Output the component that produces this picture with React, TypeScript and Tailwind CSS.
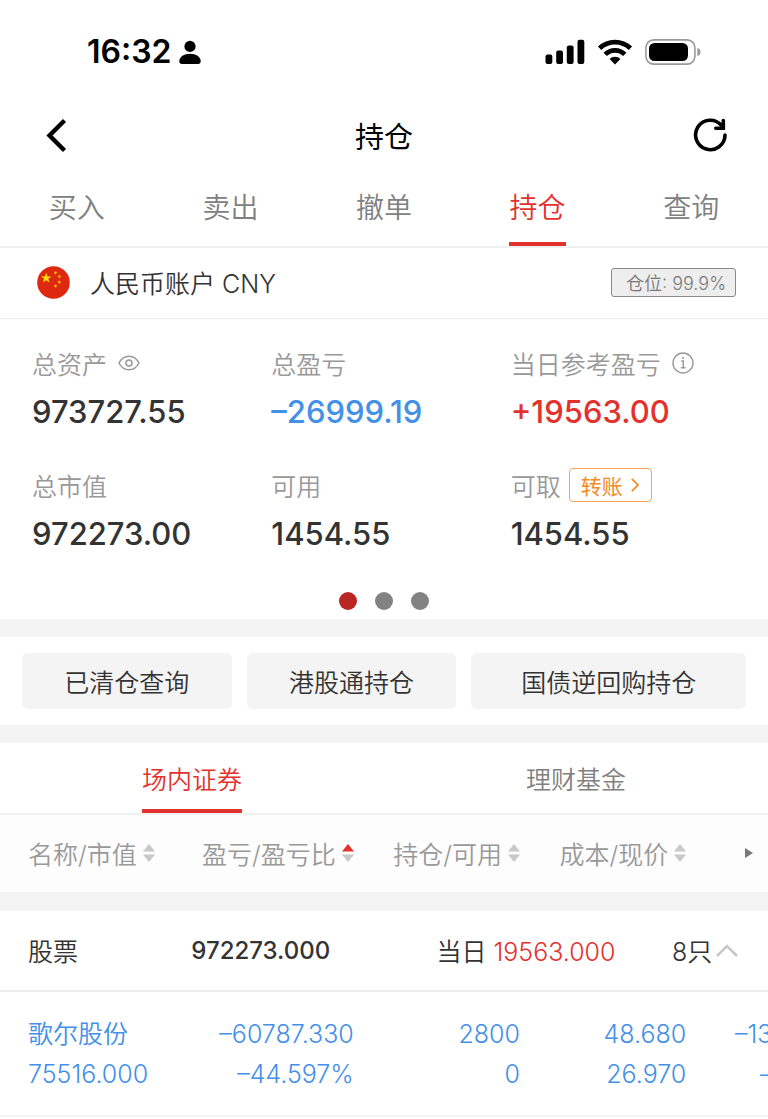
import { useState } from "react";
import clsx from "clsx";

const TRADE_TABS = ["买入", "卖出", "撤单", "持仓", "查询"];
const SHORTCUTS = ["已清仓查询", "港股通持仓", "国债逆回购持仓"];
const MARKET_TABS = ["场内证券", "理财基金"];
const COLUMNS = ["名称/市值", "盈亏/盈亏比", "持仓/可用", "成本/现价"];

const HOLDINGS = [
  {
    name: "歌尔股份",
    marketValue: "75516.000",
    cells: [
      ["–60787.330", "–44.597%"],
      ["2800", "0"],
      ["48.680", "26.970"],
      ["–13", "–"],
    ],
  },
];

function StatusBar() {
  return (
    <div className="flex h-[104px] items-center justify-between pl-[87px] pr-[67px] text-black">
      <div className="flex items-center gap-[7px]">
        <span className="text-[32px] leading-10 font-semibold">16:32</span>
        <svg width="22" height="24" viewBox="0 0 22 24" fill="currentColor">
          <circle cx="11" cy="6.4" r="5.6" />
          <path d="M0.3 21C0.3 17 5 13.8 11 13.8S21.7 17 21.7 21C21.7 23.2 20.8 24 19 24H3C1.2 24 0.3 23.2 0.3 21Z" />
        </svg>
      </div>
      <div className="flex items-center gap-3">
        <svg width="40" height="26" viewBox="0 0 40 26" fill="currentColor">
          <rect x="0.5" y="15.5" width="6.8" height="9.5" rx="2" />
          <rect x="11.2" y="11.5" width="6.8" height="13.5" rx="2" />
          <rect x="21.8" y="6.5" width="6.8" height="18.5" rx="2" />
          <rect x="32.5" y="0.8" width="6.8" height="24.2" rx="2" />
        </svg>
        <svg width="36" height="26" viewBox="0 0 36 26" fill="none" stroke="currentColor" strokeWidth="4.8">
          <path d="M2.6 9.2A22.3 22.3 0 0 1 33.4 9.2" />
          <path d="M8.2 15.4A13.8 13.8 0 0 1 27.8 15.4" />
          <path d="M18 25.4L12.6 20A7.6 7.6 0 0 1 23.4 20Z" fill="currentColor" stroke="none" />
        </svg>
        <svg width="56" height="26" viewBox="0 0 56 26" fill="none">
          <rect x="0.9" y="0.9" width="49" height="24.2" rx="7.8" stroke="#9b9b9b" strokeWidth="1.6" />
          <rect x="4" y="4" width="39" height="18" rx="5.5" fill="#000" />
          <path d="M52.3 9C54.6 9.6 55.6 11.2 55.6 13S54.6 16.4 52.3 17Z" fill="#9b9b9b" />
        </svg>
      </div>
    </div>
  );
}

function SortIcon({ active = false }: { active?: boolean }) {
  return (
    <svg width="12" height="18" viewBox="0 0 12 18" className="shrink-0">
      <path d="M6 0L12 7.4H0Z" fill={active ? "#e3322e" : "#c8c8c8"} />
      <path d="M6 18L12 10.6H0Z" fill="#c8c8c8" />
    </svg>
  );
}

function FlagIcon() {
  const star = "M0 -5L1.2 -1.6H4.8L1.9 0.6L2.9 4L0 1.9L-2.9 4L-1.9 0.6L-4.8 -1.6H-1.2Z";
  return (
    <svg width="33" height="33" viewBox="0 0 33 33">
      <circle cx="16.5" cy="16.5" r="16.3" fill="#de2910" />
      <g fill="#ffde00">
        <path d={star} transform="translate(9.2 12.2) scale(1.1)" />
        <path d={star} transform="translate(18.5 6.8) scale(.4) rotate(20)" />
        <path d={star} transform="translate(22.3 10.6) scale(.4) rotate(40)" />
        <path d={star} transform="translate(22.3 16.2) scale(.4)" />
        <path d={star} transform="translate(18.5 20) scale(.4) rotate(20)" />
      </g>
    </svg>
  );
}

function Stat({
  label,
  value,
  color = "text-[#333]",
  children,
}: {
  label: string;
  value: string;
  color?: string;
  children?: React.ReactNode;
}) {
  return (
    <div>
      <div className="flex h-9 items-center text-[25px] font-[350] text-[#999]">
        <span>{label}</span>
        {children}
      </div>
      <div className={clsx("text-[31px] leading-[62px] font-medium", color)}>{value}</div>
    </div>
  );
}

export default function App() {
  const [tradeTab, setTradeTab] = useState("持仓");
  const [marketTab, setMarketTab] = useState("场内证券");

  return (
    <div className="w-full overflow-hidden bg-white font-['Inter','Noto_Sans_CJK_SC',sans-serif] leading-[normal] text-[#333]">
      <StatusBar />

      <header className="flex h-[62px] items-center justify-between px-10 text-black">
        <button type="button" aria-label="返回" className="flex w-9 justify-center">
          <svg width="24" height="36" viewBox="0 0 24 36" fill="none" stroke="currentColor" strokeWidth="4.4">
            <path d="M18.5 3.5L3.5 18.5L18.5 33.5" />
          </svg>
        </button>
        <h1 className="text-[29px] font-normal">持仓</h1>
        <button type="button" aria-label="刷新" className="w-9">
          <svg
            width="36"
            height="36"
            viewBox="0 0 36 36"
            fill="none"
            stroke="currentColor"
            strokeWidth="3.6"
            strokeLinecap="round"
          >
            <path d="M33 18A14.7 14.7 0 1 1 29.3 8.2" />
            <path d="M31.3 3.5V11.2H23.8" strokeLinejoin="miter" />
          </svg>
        </button>
      </header>

      <nav className="grid h-[82px] grid-cols-5 border-b-2 border-[#f0f0f0]">
        {TRADE_TABS.map((tab) => (
          <button
            key={tab}
            type="button"
            onClick={() => setTradeTab(tab)}
            className={clsx(
              "relative flex items-center justify-center text-[28px] font-[350]",
              tab === tradeTab ? "text-[#e3322e]" : "text-[#808080]",
            )}
          >
            {tab}
            {tab === tradeTab && <span className="absolute bottom-0 h-1 w-[57px] bg-[#e3322e]" />}
          </button>
        ))}
      </nav>

      <section className="flex h-[71px] items-center border-b border-[#ebebeb] pb-0.5 pl-[37px] pr-8">
        <FlagIcon />
        <h2 className="ml-5 text-[25px] font-[350]">人民币账户 CNY</h2>
        <span className="ml-auto flex h-[29px] items-center rounded-[3px] border border-[#888] bg-[#eee] pl-3.5 pr-[9px] text-[18px] font-[350] text-[#777]">
          仓位: 99.9%
        </span>
      </section>

      <section className="pt-[26px]">
        <div className="grid grid-cols-3 gap-y-6 pl-8 pr-[18px]">
          <Stat label="总资产" value="973727.55">
            <button type="button" aria-label="隐藏金额" className="ml-[11px]">
              <svg width="22" height="16" viewBox="0 0 22 16" fill="none" stroke="#999" strokeWidth="1.5">
                <path d="M1 8C3.4 3.4 6.8 1.2 11 1.2S18.6 3.4 21 8C18.6 12.6 15.2 14.8 11 14.8S3.4 12.6 1 8Z" />
                <circle cx="11" cy="8" r="3" />
              </svg>
            </button>
          </Stat>
          <Stat label="总盈亏" value="–26999.19" color="text-[#4390e8]" />
          <Stat label="当日参考盈亏" value="+19563.00" color="text-[#e3322e]">
            <button type="button" aria-label="说明" className="ml-[11px]">
              <svg width="22" height="22" viewBox="0 0 22 22" fill="none" stroke="#999" strokeWidth="1.4">
                <circle cx="11" cy="11" r="10" />
                <path d="M9.2 9H11.3V15.6M9 15.8H13.4" />
                <circle cx="11" cy="6" r="1.1" fill="#999" stroke="none" />
              </svg>
            </button>
          </Stat>
          <Stat label="总市值" value="972273.00" />
          <Stat label="可用" value="1454.55" />
          <Stat label="可取" value="1454.55">
            <button
              type="button"
              className="ml-2 flex h-[34px] items-center gap-2 rounded-[4px] border border-[#f7a355] pl-[11px] pr-3 text-[21px] font-normal text-[#f58a1f]"
            >
              转账
              <svg width="8" height="14" viewBox="0 0 8 14" fill="none" stroke="currentColor" strokeWidth="1.7">
                <path d="M0.8 0.8L7 7L0.8 13.2" />
              </svg>
            </button>
          </Stat>
        </div>
        <div className="flex justify-center gap-[18px] pt-[27px] pb-[9px]">
          <span className="size-[18px] rounded-full bg-[#b92624]" />
          <span className="size-[18px] rounded-full bg-[#828282]" />
          <span className="size-[18px] rounded-full bg-[#828282]" />
        </div>
      </section>

      <section className="grid grid-cols-[42fr_42fr_55fr] gap-[15px] border-y-18 border-[#f4f4f4] px-[22px] py-4">
        {SHORTCUTS.map((text) => (
          <button key={text} type="button" className="h-14 rounded-md bg-[#f4f4f4] text-[25px] font-[350]">
            {text}
          </button>
        ))}
      </section>

      <nav className="grid h-[72px] grid-cols-2 border-b-2 border-[#f0f0f0]">
        {MARKET_TABS.map((tab) => (
          <button
            key={tab}
            type="button"
            onClick={() => setMarketTab(tab)}
            className={clsx(
              "relative flex items-center justify-center text-[25px] font-[350]",
              tab === marketTab ? "text-[#e3322e]" : "text-[#808080]",
            )}
          >
            {tab}
            {tab === marketTab && <span className="absolute bottom-0 h-1 w-[100px] bg-[#e3322e]" />}
          </button>
        ))}
      </nav>

      {/* wider than the screen, the last column runs off the right edge */}
      <div className="overflow-hidden">
        <table className="w-[111%] table-fixed text-right text-[25px] font-[350]">
          <thead>
            <tr className="h-[86px] border-b-19 border-[#f4f4f4] bg-[#fdfdfd] text-[#999]">
              {COLUMNS.map((title, i) => (
                <th key={title} scope="col" className={clsx("p-0 font-[350]", i === 0 && "w-[22%] pl-7")}>
                  <button
                    type="button"
                    className={clsx(
                      "flex w-full items-center gap-1.5 whitespace-nowrap",
                      i === 0 ? "justify-start" : "justify-end",
                    )}
                  >
                    {title}
                    <SortIcon active={i === 1} />
                  </button>
                </th>
              ))}
              <th scope="col" className="p-0">
                <button type="button" aria-label="更多列" className="ml-[59px] block">
                  <svg width="8" height="10" viewBox="0 0 8 10" fill="#777">
                    <path d="M0 0L8 5L0 10Z" />
                  </svg>
                </button>
              </th>
            </tr>
          </thead>
          <tbody>
            <tr className="h-[90px] border-b-2 border-[#ebebeb]">
              <td colSpan={5} className="p-0">
                <div className="grid w-[90%] grid-cols-[46fr_69fr_85fr] items-center pl-7 pr-[29px] text-left">
                  <span>股票</span>
                  <span className="text-[24px] font-medium">972273.000</span>
                  <div className="flex items-center justify-between">
                    <span>
                      当日 <span className="text-[#e3322e]">19563.000</span>
                    </span>
                    <button type="button" className="flex items-center gap-1">
                      8只
                      <svg width="22" height="13" viewBox="0 0 22 13" fill="none" stroke="#c8c8c8" strokeWidth="2.6">
                        <path d="M1 12L11 2L21 12" />
                      </svg>
                    </button>
                  </div>
                </div>
              </td>
            </tr>
            {HOLDINGS.map((row) => (
              <tr key={row.name} className="h-[125px] border-b-2 border-[#f4f4f4] leading-10 text-[#4390e8]">
                <td className="p-0 pl-7 text-left">
                  <div>{row.name}</div>
                  <div>{row.marketValue}</div>
                </td>
                {row.cells.map(([top, bottom], i) => (
                  <td key={i} className={clsx("p-0", i === 3 && "pr-20")}>
                    <div>{top}</div>
                    <div>{bottom}</div>
                  </td>
                ))}
              </tr>
            ))}
          </tbody>
        </table>
      </div>
    </div>
  );
}
